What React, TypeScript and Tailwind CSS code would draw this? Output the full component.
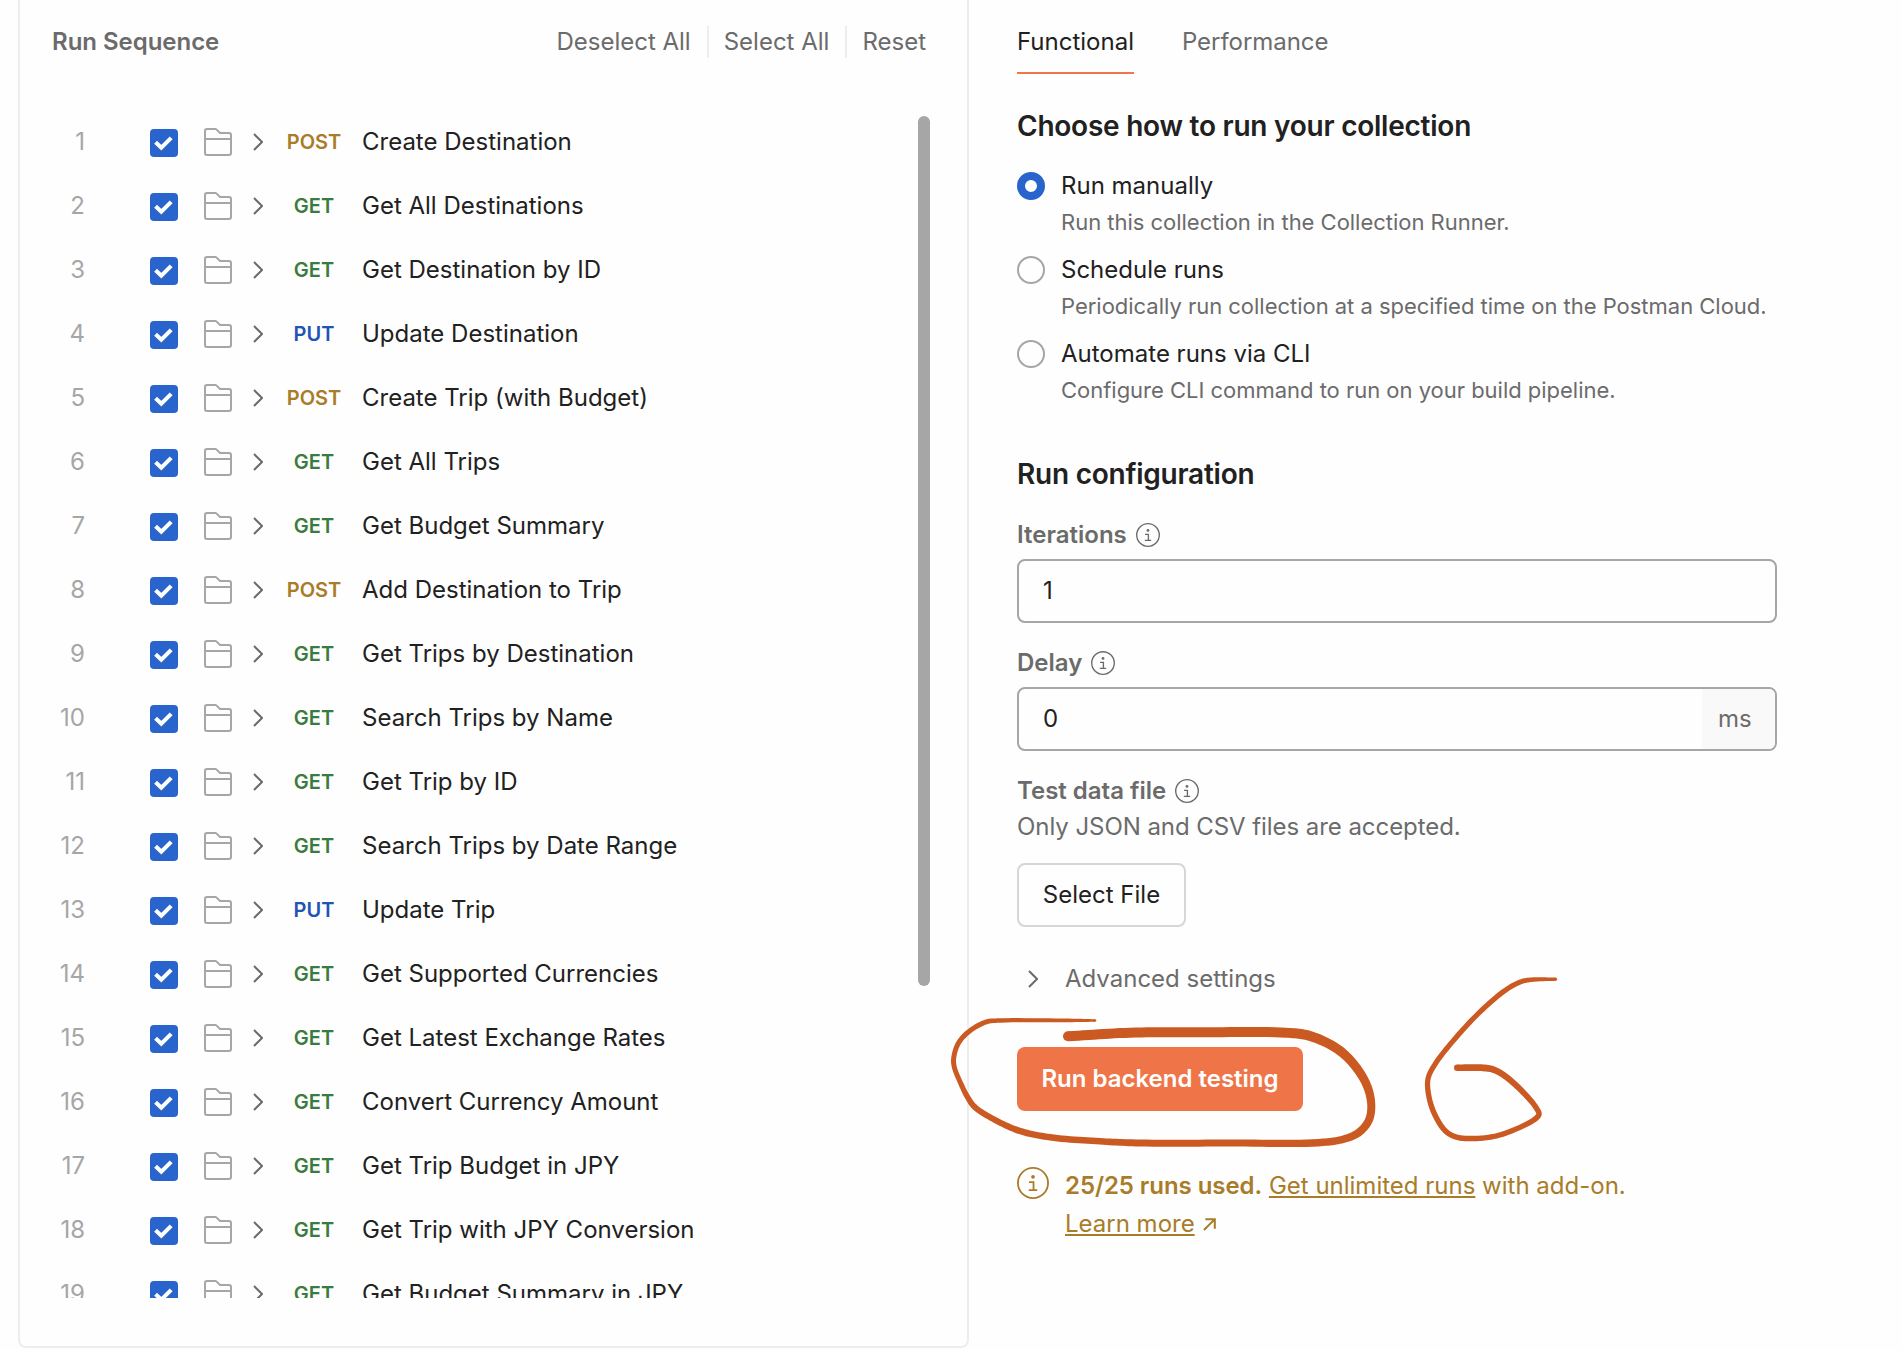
import React from "react";

const METHOD_COLORS: Record<string, string> = {
  POST: "text-[#a87c28]",
  GET: "text-[#387d3c]",
  PUT: "text-[#2353b3]",
};

const REQUESTS: [string, string][] = [
  ["POST", "Create Destination"],
  ["GET", "Get All Destinations"],
  ["GET", "Get Destination by ID"],
  ["PUT", "Update Destination"],
  ["POST", "Create Trip (with Budget)"],
  ["GET", "Get All Trips"],
  ["GET", "Get Budget Summary"],
  ["POST", "Add Destination to Trip"],
  ["GET", "Get Trips by Destination"],
  ["GET", "Search Trips by Name"],
  ["GET", "Get Trip by ID"],
  ["GET", "Search Trips by Date Range"],
  ["PUT", "Update Trip"],
  ["GET", "Get Supported Currencies"],
  ["GET", "Get Latest Exchange Rates"],
  ["GET", "Convert Currency Amount"],
  ["GET", "Get Trip Budget in JPY"],
  ["GET", "Get Trip with JPY Conversion"],
  ["GET", "Get Budget Summary in JPY"],
];

function Checkbox() {
  return (
    <span className="mt-[1px] flex size-7 shrink-0 items-center justify-center rounded-[4px] bg-[#2864cc]">
      <svg viewBox="0 0 28 28" className="size-7" fill="none" stroke="#fff" strokeWidth="4">
        <path d="M5.6 13.2 11.3 18.7 21.2 8.8" />
      </svg>
    </span>
  );
}

function FolderIcon() {
  return (
    <svg viewBox="0 0 28 28" className="size-7 shrink-0" fill="none" stroke="#a6a6a6" strokeWidth="2" strokeLinejoin="round">
      <path d="M1 25V3a2 2 0 0 1 2-2h8.2a2 2 0 0 1 1.4.6L16 5h9a2 2 0 0 1 2 2v18a2 2 0 0 1-2 2H3a2 2 0 0 1-2-2ZM1 11h26" />
    </svg>
  );
}

function Chevron() {
  return (
    <svg viewBox="0 0 10 18" className="h-[18px] w-[10px] shrink-0" fill="none" stroke="#6b6b6b" strokeWidth="2">
      <path d="M1 1 9 9 1 17" />
    </svg>
  );
}

function InfoIcon({ className }: { className: string }) {
  return (
    <svg viewBox="0 0 24 24" className={className} fill="none" stroke="currentColor" strokeWidth="1.35">
      <circle cx="12" cy="12" r="11.3" />
      <path d="M9 11.4h3.4v5.9M8.8 17.3h6.4" />
      <circle cx="12" cy="7.4" r="1.4" fill="currentColor" stroke="none" />
    </svg>
  );
}

function RunOption({ title, text, checked }: { title: string; text: string; checked?: boolean }) {
  return (
    <div className="flex h-[84px] gap-4">
      {checked ? (
        <span className="mt-[7px] size-7 shrink-0 rounded-full border-8 border-[#2864cc] bg-white" />
      ) : (
        <span className="mt-[7px] size-7 shrink-0 rounded-full border-2 border-[#a6a6a6]" />
      )}
      <div className="pt-px">
        <div className="h-10 text-2xl leading-10 text-[#212121]">{title}</div>
        <div className="text-[22px] leading-8 tracking-[-0.02px] whitespace-nowrap text-[#6b6b6b]">{text}</div>
      </div>
    </div>
  );
}

function FieldLabel({ children }: { children: React.ReactNode }) {
  return (
    <div className="flex h-10 items-center gap-[9px] text-2xl font-semibold text-[#6b6b6b]">
      {children}
      <InfoIcon className="size-6" />
    </div>
  );
}

type Point = [x: number, y: number, width: number];

/* Catmull-Rom sampling of a pen stroke whose width changes along its length. */
function sample(points: Point[], steps = 12): Point[] {
  const out: Point[] = [];
  for (let i = 0; i < points.length - 1; i++) {
    const p0 = points[Math.max(i - 1, 0)];
    const p1 = points[i];
    const p2 = points[i + 1];
    const p3 = points[Math.min(i + 2, points.length - 1)];
    const l0 = Math.sqrt(Math.hypot(p1[0] - p0[0], p1[1] - p0[1])) || 1e-3;
    const l1 = Math.sqrt(Math.hypot(p2[0] - p1[0], p2[1] - p1[1])) || 1e-3;
    const l2 = Math.sqrt(Math.hypot(p3[0] - p2[0], p3[1] - p2[1])) || 1e-3;
    for (let s = 0; s < steps; s++) {
      const t = s / steps;
      const at = (k: 0 | 1) => {
        const d = p2[k] - p1[k];
        const m1 = i === 0 ? d : l1 * ((p1[k] - p0[k]) / l0 - (p2[k] - p0[k]) / (l0 + l1) + d / l1);
        const m2 = i === points.length - 2 ? d : l1 * (d / l1 - (p3[k] - p1[k]) / (l1 + l2) + (p3[k] - p2[k]) / l2);
        const t2 = t * t;
        const t3 = t2 * t;
        return (2 * t3 - 3 * t2 + 1) * p1[k] + (t3 - 2 * t2 + t) * m1 + (3 * t2 - 2 * t3) * p2[k] + (t3 - t2) * m2;
      };
      out.push([at(0), at(1), p1[2] + (p2[2] - p1[2]) * t]);
    }
  }
  out.push(points[points.length - 1]);
  return out;
}

const LOOP_MARK: Point[] = [
  [1068, 1036.3, 10], [1130, 1032.7, 10], [1200, 1032.3, 10], [1286, 1032.7, 10], [1310, 1036, 10], [1338, 1049.3, 9.5],
  [1356.7, 1068, 9], [1368, 1088.3, 8.5], [1371.3, 1107, 8], [1368.5, 1121, 8], [1358.5, 1132.7, 8], [1343, 1139.3, 7.5],
  [1318, 1142.7, 7.5], [1230, 1143, 7], [1140, 1143, 7], [1100, 1141.3, 6.5], [1050, 1137.3, 6.5], [1020, 1131, 6.5],
  [997, 1121, 6], [975, 1107.3, 6], [967.5, 1097, 5.5], [960, 1081.7, 5], [954.3, 1067, 5], [953.7, 1058, 5],
  [958.5, 1043, 5], [970, 1030.7, 5], [986.5, 1021.8, 5], [997, 1020.6, 4.5], [1073, 1020.4, 3.5], [1095, 1020.5, 2.5],
];

const STEP_MARK: Point[] = [
  [1555.5, 979.2, 3.2], [1533, 979.6, 4.5], [1521.7, 981.5, 5], [1506.7, 989.3, 5.2], [1483, 1009, 5.2], [1456.7, 1036.7, 5.2],
  [1435, 1064.3, 5.2], [1428, 1079, 5.2], [1429, 1097, 5.4], [1435, 1115, 5.5], [1445, 1130.5, 5.5], [1455, 1136.7, 5.5],
  [1473, 1138.6, 5.5], [1496.7, 1135.8, 5.3], [1520, 1127.3, 5.2], [1536, 1118.3, 5.5], [1539, 1114, 5.5], [1536, 1107.5, 5.5],
  [1526.7, 1096, 5.8], [1506.7, 1077.3, 6.2], [1494, 1069.8, 6.6], [1485, 1068, 6.8], [1457.3, 1067.7, 6.6],
];

function PenStroke({ points }: { points: Point[] }) {
  const pts = sample(points);
  const left: string[] = [];
  const right: string[] = [];
  pts.forEach(([x, y, w], i) => {
    const a = pts[Math.max(i - 1, 0)];
    const b = pts[Math.min(i + 1, pts.length - 1)];
    const len = Math.hypot(b[0] - a[0], b[1] - a[1]) || 1;
    const nx = (-(b[1] - a[1]) / len) * (w / 2);
    const ny = ((b[0] - a[0]) / len) * (w / 2);
    left.push(`${(x + nx).toFixed(2)} ${(y + ny).toFixed(2)}`);
    right.unshift(`${(x - nx).toFixed(2)} ${(y - ny).toFixed(2)}`);
  });
  const ends = [pts[0], pts[pts.length - 1]];
  return (
    <g fill="#cb5a22">
      <path d={`M${left.concat(right).join("L")}Z`} />
      {ends.map((p) => (
        <circle key={`${p[0]}-${p[1]}`} cx={p[0]} cy={p[1]} r={p[2] / 2} />
      ))}
    </g>
  );
}

export default function App() {
  return (
    <div className="relative flex h-[1350px] w-[1902px] overflow-hidden bg-[#fefefe] pl-[18px] font-['Inter',sans-serif] text-2xl text-[#212121]">
      <section className="flex h-[1348px] w-[951px] shrink-0 flex-col rounded-b-lg border-2 border-t-0 border-[#ededed]">
        <header className="flex h-[116px] items-start justify-between pt-[26px] pr-10 pl-8 text-[#6b6b6b]">
          <h2 className="leading-8 font-semibold tracking-[-0.03px]">Run Sequence</h2>
          <div className="flex leading-8">
            <span className="pr-4">Deselect All</span>
            <span className="border-l-2 border-[#ededed] pr-4 pl-[15px]">Select All</span>
            <span className="border-l-2 border-[#ededed] pr-px pl-[15px]">Reset</span>
          </div>
        </header>
        <div className="flex h-[1182px] justify-between overflow-hidden pr-[37px]">
          <ol className="-mt-[6px]">
            {REQUESTS.map(([method, name], i) => (
              <li key={name} className="flex h-16 items-center whitespace-nowrap">
                <span className="w-[65px] text-right text-[#a6a6a6]">{i + 1}</span>
                <span className="ml-[65px] flex items-center">
                  <Checkbox />
                  <span className="ml-[26px] flex">
                    <FolderIcon />
                  </span>
                  <span className="ml-[21px] flex">
                    <Chevron />
                  </span>
                </span>
                <span className={`ml-4 w-[70px] text-center text-xl font-semibold ${METHOD_COLORS[method]}`}>{method}</span>
                <span className="ml-[13px]">{name}</span>
              </li>
            ))}
          </ol>
          <div className="h-[870px] w-3 rounded-full bg-[#a6a6a6]" />
        </div>
      </section>

      <section className="ml-12 w-[760px]">
        <nav className="flex gap-12">
          <span className="h-[74px] border-b-2 border-[#f07548] pt-[26px] leading-8">Functional</span>
          <span className="pt-[26px] leading-8 tracking-[-0.05px] text-[#6b6b6b]">Performance</span>
        </nav>

        <h2 className="mt-8 text-[28px] leading-10 font-semibold tracking-[-0.24px]">Choose how to run your collection</h2>
        <div className="mt-[19px] h-[289px]">
          <RunOption checked title="Run manually" text="Run this collection in the Collection Runner." />
          <RunOption title="Schedule runs" text="Periodically run collection at a specified time on the Postman Cloud." />
          <RunOption title="Automate runs via CLI" text="Configure CLI command to run on your build pipeline." />
        </div>

        <h2 className="text-[28px] leading-10 font-semibold tracking-[-0.24px]">Run configuration</h2>
        <div className="mt-[21px]">
          <FieldLabel>Iterations</FieldLabel>
          <div className="mt-1 flex h-16 items-center rounded-lg border-2 border-[#a6a6a6] pl-6">1</div>
        </div>
        <div className="mt-5">
          <FieldLabel>Delay</FieldLabel>
          <div className="mt-1 flex h-16 items-center justify-between overflow-hidden rounded-lg border-2 border-[#a6a6a6] pl-6">
            0
            <span className="flex h-full w-[73px] items-center bg-[#f9f9f9] pl-4 text-[#6b6b6b]">ms</span>
          </div>
        </div>
        <div className="mt-5">
          <FieldLabel>Test data file</FieldLabel>
          <p className="leading-8 tracking-[-0.06px] text-[#6b6b6b]">Only JSON and CSV files are accepted.</p>
          <button className="mt-5 h-16 w-[169px] rounded-lg border-2 border-[#d6d6d6]">Select File</button>
        </div>

        <div className="mt-9 flex h-8 items-center text-[#6b6b6b]">
          <span className="flex w-12 pl-[11px]">
            <Chevron />
          </span>
          Advanced settings
        </div>

        <button className="mt-[52px] h-16 w-[286px] rounded-lg bg-[#ef7548] font-semibold text-white">Run backend testing</button>

        <div className="mt-[55px] flex text-[#a87c28]">
          <InfoIcon className="mt-px mr-4 size-8" />
          <div className="pt-px leading-[38px] whitespace-nowrap">
            <div>
              <b className="font-semibold tracking-[-0.06px]">25/25 runs used.</b>{" "}
              <span className="underline decoration-2 underline-offset-2">Get unlimited runs</span> with add-on.
            </div>
            <div className="flex items-center">
              <span className="underline decoration-2 underline-offset-2">Learn more</span>
              <svg viewBox="0 0 14 14" className="ml-2 size-[13px]" fill="none" stroke="currentColor" strokeWidth="2.2">
                <path d="M1 13 12.5 1.5M2.5 1.3h10.2v10.2" />
              </svg>
            </div>
          </div>
        </div>
      </section>

      <svg viewBox="0 0 1902 1350" className="pointer-events-none absolute inset-0 h-[1350px] w-[1902px]" fill="none">
        <PenStroke points={LOOP_MARK} />
        <PenStroke points={STEP_MARK} />
      </svg>
    </div>
  );
}
